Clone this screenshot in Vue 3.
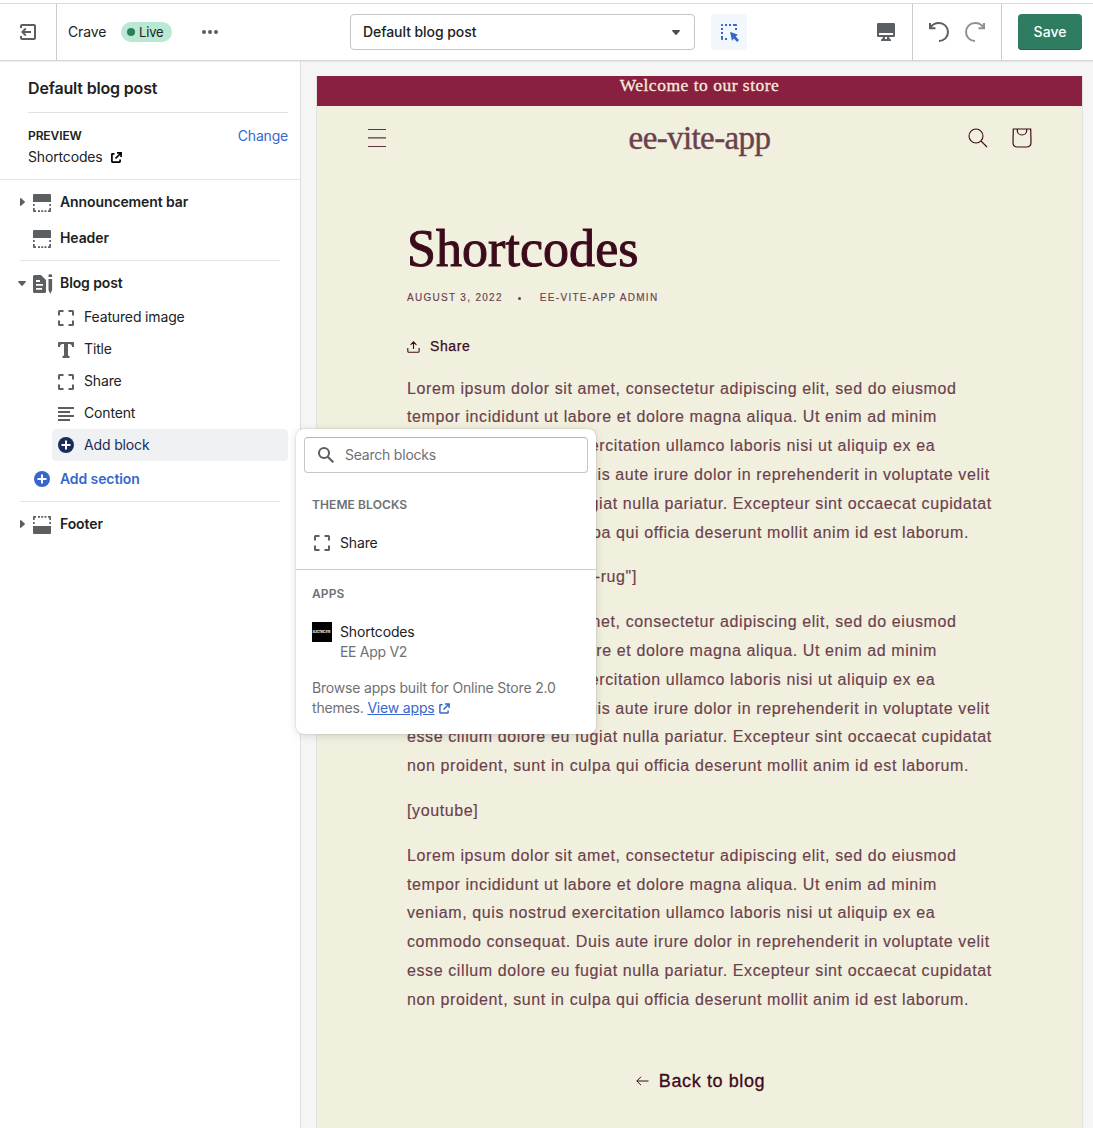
<script setup>
const lorem = [
  'Lorem ipsum dolor sit amet, consectetur adipiscing elit, sed do eiusmod',
  'tempor incididunt ut labore et dolore magna aliqua. Ut enim ad minim',
  'veniam, quis nostrud exercitation ullamco laboris nisi ut aliquip ex ea',
  'commodo consequat. Duis aute irure dolor in reprehenderit in voluptate velit',
  'esse cillum dolore eu fugiat nulla pariatur. Excepteur sint occaecat cupidatat',
  'non proident, sunt in culpa qui officia deserunt mollit anim id est laborum.',
]
const paragraphs = [lorem, ['[product handle="striped-rug"]'], lorem, ['[youtube]'], lorem]
const blocks = [
  { label: 'Featured image', icon: 'frame' },
  { label: 'Title', icon: 'title' },
  { label: 'Share', icon: 'frame' },
  { label: 'Content', icon: 'lines' },
]
</script>

<template>
  <div class="editor">
    <header class="topbar">
      <div class="exit">
        <svg width="20" height="20" viewBox="0 0 20 20" fill="none" stroke="#5c5f62" stroke-width="2">
          <path d="M3 6V4Q3 3 4 3H16Q17 3 17 4V16Q17 17 16 17H4Q3 17 3 16V14" />
          <path d="M4.5 10H13" /><path d="M7.8 6.5 4.3 10 7.8 13.5" stroke-width="1.8" />
        </svg>
      </div>
      <div class="theme">
        <span class="theme-name">Crave</span>
        <span class="badge"><i></i>Live</span>
        <svg class="more" width="16" height="4" viewBox="0 0 16 4" fill="#5c5f62"><circle cx="2" cy="2" r="2" /><circle cx="8" cy="2" r="2" /><circle cx="14" cy="2" r="2" /></svg>
      </div>
      <div class="center">
        <div class="select">
          <span>Default blog post</span>
          <svg width="8" height="5" viewBox="0 0 8 5" fill="#4a4d50"><path d="M.6 0h6.8q.8.2.4.9L4.5 4.7q-.5.5-1 0L.2.9Q-.1.2.6 0z" /></svg>
        </div>
        <div class="inspect">
          <svg width="20" height="20" viewBox="0 0 20 20" fill="#3767cc">
            <path d="M1 2q0-1 1-1h1v2H1zM5 1h2v2H5zM9 1h2v2H9zM13 1h2v2h-2zM1 5h2v2H1zM1 9h2v2H1zM1 13h2v2H1zM15 5h2v2h-2zM5 15h2v2H5zM1 15h2v2H2q-1 0-1-1zM15 1h1q1 0 1 1v1h-2z" />
            <path d="M10.700 9.100 17.300 11.600q.5.300 0 .7L15.700 13.600 19 17 17.100 18.900 13.800 15.500 12.500 17.300q-.5.300-.7-.2L10.200 9.700q0-.6.5-.6z" />
          </svg>
        </div>
      </div>
      <div class="device">
        <svg width="18" height="18" viewBox="0 0 18 18" fill="#5c5f62"><path fill-rule="evenodd" d="M1.200 0h15.600Q18 0 18 1.200v11.600q0 1.200-1.200 1.200H12q.2 1.600 1.200 2 .8.200.8 1v1H4v-1q0-.8.8-1 1-.4 1.200-2H1.200Q0 14 0 12.800V1.200Q0 0 1.200 0zM2 10v2h14v-2zM8 14v2h2v-2z" /></svg>
      </div>
      <div class="history">
        <svg width="22" height="22" viewBox="0 0 22 22" fill="none" stroke="#5c5f62" stroke-width="2"><path d="M2 2V7.200H7.500" /><path d="M2.300 7C4 3.700 7.300 2 11 2A9 9 0 1 1 11 20" /></svg>
        <svg width="22" height="22" viewBox="0 0 22 22" fill="none" stroke="#8c9196" stroke-width="2"><path d="M20 2V7.200H14.500" /><path d="M19.700 7C18 3.700 14.700 2 11 2A9 9 0 1 0 11 20" /></svg>
      </div>
      <div class="save-cell"><button class="save">Save</button></div>
    </header>

    <div class="body">
      <aside class="sidebar">
        <h2>Default blog post</h2>
        <div class="preview-info">
          <div class="info-row"><b>PREVIEW</b><a>Change</a></div>
          <div class="info-name">
            Shortcodes
            <svg width="11" height="11" viewBox="0 0 11 11" fill="none" stroke="#000" stroke-width="1.700"><path d="M3.500 1.800H1.500Q.9 1.800.9 2.400V9.500Q.9 10.100 1.500 10.100H8.500Q9.100 10.100 9.100 9.500V7.500M6 .9H10.100V5M10 1 4.500 6.500" /></svg>
          </div>
        </div>
        <nav class="tree">
          <div class="row">
            <svg class="caret" width="5" height="8" viewBox="0 0 5 8" fill="#5c5f62"><path d="M0 .6Q.2-.2 1 .3L4.700 3.500q.5.500 0 1L1 7.700Q.2 8.200 0 7.400z" /></svg>
            <svg width="18" height="18" viewBox="0 0 18 18" fill="#5c5f62"><path d="M1 0h16q1 0 1 1v7H0V1q0-1 1-1z" /><path d="M0 10h1.700v2H0zM16.300 10H18v2h-1.700zM0 14h1.700v2.300H3V18H1q-1 0-1-1zM16.300 14H18v3q0 1-1 1h-2v-1.700h1.300zM5 16.300h2V18H5zM8.200 16.300h2V18h-2zM11.500 16.300h2V18h-2z" /></svg>
            <b>Announcement bar</b>
          </div>
          <div class="row">
            <i class="caret"></i>
            <svg width="18" height="18" viewBox="0 0 18 18" fill="#5c5f62"><path d="M1 0h16q1 0 1 1v7H0V1q0-1 1-1z" /><path d="M0 10h1.700v2H0zM16.300 10H18v2h-1.700zM0 14h1.700v2.300H3V18H1q-1 0-1-1zM16.300 14H18v3q0 1-1 1h-2v-1.700h1.300zM5 16.300h2V18H5zM8.200 16.300h2V18h-2zM11.500 16.300h2V18h-2z" /></svg>
            <b>Header</b>
          </div>
          <hr />
          <div class="row">
            <svg class="caret down" width="8" height="5" viewBox="0 0 8 5" fill="#5c5f62"><path d="M.6 0h6.800q.8.200.4.900L4.500 4.700q-.5.500-1 0L.2.900Q-.1.200.6 0z" /></svg>
            <svg class="wide" width="20" height="20" viewBox="0 0 20 20" fill="#5c5f62"><path fill-rule="evenodd" d="M1.500 1H8l5 5v11.500q0 1.500-1.500 1.500h-10Q0 19 0 17.500v-15Q0 1 1.500 1zM3 6v2h4V6zM3 10v1.700h7V10zM3 14v1.700h6V14z" /><path d="M15.500 1.500q0-1.300 1.300-1.300h1q1.300 0 1.300 1.300V3h-3.600zM15.500 5h3.600v11l-1.800 4-1.800-4z" /></svg>
            <b>Blog post</b>
          </div>
          <div v-for="b in blocks" :key="b.label" class="block">
            <svg v-if="b.icon === 'frame'" width="16" height="16" viewBox="0 0 16 16" fill="none" stroke="#5c5f62" stroke-width="2"><path d="M1 5.500V1.500Q1 1 1.500 1H5.500M10.500 1H14.500Q15 1 15 1.500V5.500M15 10.500V14.500Q15 15 14.500 15H10.500M5.500 15H1.500Q1 15 1 14.500V10.500" /></svg>
            <svg v-else-if="b.icon === 'title'" width="16" height="16" viewBox="0 0 16 16" fill="#5c5f62"><path d="M1 0h14q1 0 1 1v4h-2Q14 2 11.500 2H10v11q0 1 1.500 1v2h-7v-2Q6 14 6 13V2H4.500Q2 2 2 5H0V1q0-1 1-1z" /></svg>
            <svg v-else width="16" height="16" viewBox="0 0 16 16" fill="#5c5f62"><path d="M0 1h16v2H0zM0 5h12v2H0zM0 9h16v2H0zM0 13h12v2H0z" /></svg>
            <span>{{ b.label }}</span>
          </div>
          <div class="block active">
            <svg width="16" height="16" viewBox="0 0 16 16"><circle cx="8" cy="8" r="8" fill="#1a2c5b" /><path d="M8 3.500v9M3.500 8h9" stroke="#fff" stroke-width="2" /></svg>
            <span>Add block</span>
          </div>
          <div class="row add">
            <i class="caret"></i>
            <svg width="16" height="16" viewBox="0 0 16 16"><circle cx="8" cy="8" r="8" fill="#3767cc" /><path d="M8 3.500v9M3.500 8h9" stroke="#fff" stroke-width="2" /></svg>
            <b>Add section</b>
          </div>
          <hr />
          <div class="row">
            <svg class="caret" width="5" height="8" viewBox="0 0 5 8" fill="#5c5f62"><path d="M0 .6Q.2-.2 1 .3L4.700 3.500q.5.500 0 1L1 7.700Q.2 8.200 0 7.400z" /></svg>
            <svg class="flip" width="18" height="18" viewBox="0 0 18 18" fill="#5c5f62"><path d="M1 0h16q1 0 1 1v7H0V1q0-1 1-1z" /><path d="M0 10h1.700v2H0zM16.300 10H18v2h-1.700zM0 14h1.700v2.300H3V18H1q-1 0-1-1zM16.300 14H18v3q0 1-1 1h-2v-1.700h1.300zM5 16.300h2V18H5zM8.200 16.300h2V18h-2zM11.500 16.300h2V18h-2z" /></svg>
            <b>Footer</b>
          </div>
        </nav>
      </aside>

      <main class="canvas">
        <div class="store">
          <div class="announce">Welcome to our store</div>
          <div class="store-head">
            <svg width="18" height="19" viewBox="0 0 18 19" fill="#5f3440"><path d="M0 0h18v1.100H0zM0 8.300h18v1.100H0zM0 16.900h18V18H0z" /></svg>
            <span class="brand">ee-vite-app</span>
            <div class="head-icons">
              <svg width="20" height="20" viewBox="0 0 20 20" fill="none" stroke="#3b0b1b" stroke-width="1.100"><circle cx="8" cy="8" r="7" /><path d="M13 13l6 6" /></svg>
              <svg width="20" height="20" viewBox="0 0 20 20" fill="none" stroke="#3b0b1b" stroke-width="1.200"><path d="M1.300 1H18.700L19 14.500Q19 19 14.500 19H5.500Q1 19 1 14.500ZM5.300 1V2.500A4.700 4.500 0 0 0 14.700 2.500V1" /></svg>
            </div>
          </div>
          <article>
            <h1>Shortcodes</h1>
            <div class="meta"><span>AUGUST 3, 2022</span><i></i><span>EE-VITE-APP ADMIN</span></div>
            <div class="share">
              <svg width="13" height="12" viewBox="0 0 13 12" fill="none" stroke="#3b0b1b" stroke-width="1.100"><path d="M.8 7V10.200Q.8 11.300 1.900 11.300H11Q12.100 11.300 12.100 10.200V7M6.500 8V1M3.600 3.800 6.500.9 9.400 3.800" /></svg>
              <span>Share</span>
            </div>
            <p v-for="(p, i) in paragraphs" :key="i"><span v-for="line in p" :key="line">{{ line }}</span></p>
            <div class="back">
              <svg width="13" height="10" viewBox="0 0 13 10" fill="none" stroke="#3b0b1b" stroke-width="1"><path d="M.8 5H12.500M5 .8.8 5 5 9.200" /></svg>
              <span>Back to blog</span>
            </div>
          </article>
        </div>
      </main>
    </div>

    <div class="popover">
      <div class="search">
        <svg width="16" height="16" viewBox="0 0 16 16" fill="none" stroke="#5c5f62" stroke-width="2"><circle cx="6" cy="6" r="5" /><path d="M9.700 9.700l5.600 5.600" /></svg>
        <span>Search blocks</span>
      </div>
      <div class="caption">THEME BLOCKS</div>
      <div class="option">
        <svg width="16" height="16" viewBox="0 0 16 16" fill="none" stroke="#5c5f62" stroke-width="2"><path d="M1 5.500V1.500Q1 1 1.500 1H5.500M10.500 1H14.500Q15 1 15 1.500V5.500M15 10.500V14.500Q15 15 14.500 15H10.500M5.500 15H1.500Q1 15 1 14.500V10.500" /></svg>
        <span>Share</span>
      </div>
      <hr />
      <div class="caption apps">APPS</div>
      <div class="app">
        <div class="app-logo"><span>ELECTRIC EYE</span></div>
        <div class="app-text"><div>Shortcodes</div><div class="sub">EE App V2</div></div>
      </div>
      <div class="browse">
        Browse apps built for Online Store 2.0<br />themes. <a>View apps</a>
        <svg width="11" height="11" viewBox="0 0 11 11" fill="none" stroke="#3767cc" stroke-width="1.500"><path d="M3.500 1.800H1.500Q.9 1.800.9 2.400V9.500Q.9 10.100 1.500 10.100H8.500Q9.100 10.100 9.100 9.500V7.500M6 .9H10.100V5M10 1 4.500 6.500" /></svg>
      </div>
    </div>
  </div>
</template>

<style>
body { margin: 0; overflow: hidden; }
</style>

<style scoped>
* { box-sizing: border-box; }
svg { display: block; flex: none; }
.editor { position: relative; width: 1093px; height: 1128px; overflow: hidden; display: flex; flex-direction: column; background: #fff; color: #202223; font: 400 14px/20px Inter, sans-serif; letter-spacing: -.15px; padding-top: 3px; }
b { font-weight: 600; letter-spacing: -.1px; }
hr { border: 0; height: 1px; margin: 4px 20px; background: #e1e3e5; }
.topbar { height: 58px; flex: none; display: flex; border-top: 1px solid #d9dadc; border-bottom: 1px solid #d5d6d8; box-shadow: 0 1px 1px rgba(0,0,0,.06); z-index: 1; }
.exit { width: 57px; border-right: 1px solid #c9cccf; display: flex; align-items: center; justify-content: center; }
.theme { width: 293px; padding-left: 11px; display: flex; align-items: center; }
.theme-name { width: 37px; margin-top: -1px; }
.badge { display: flex; align-items: center; width: 51px; height: 20px; margin-left: 16px; padding: 0 0 0 6px; border-radius: 10px; background: #b9e8d3; font-size: 13px; }
.badge i { width: 8px; height: 8px; margin-right: 4px; border-radius: 50%; background: #2a7f5f; }
.more { margin-left: 30px; }
.center { flex: 1; display: flex; align-items: center; gap: 16px; }
.select { width: 345px; height: 36px; padding: 0 14px 0 12px; display: flex; align-items: center; justify-content: space-between; border: 1px solid #c4c7ca; border-radius: 4px; font-weight: 500; letter-spacing: -.06px; }
.inspect { width: 36px; height: 36px; padding: 9px 8px 8px 9px; border-radius: 4px; background: #f2f7fe; }
.device { width: 53px; padding: 19px 0 0 17px; border-right: 1px solid #c9cccf; }
.history { width: 89px; padding: 17px 0 0 15px; display: flex; gap: 14px; border-right: 1px solid #c9cccf; }
.save-cell { width: 91px; padding: 10px 0 0 16px; }
.save { width: 64px; height: 36px; padding: 0 0 1px; border: 0; border-radius: 4px; background: #2e7d61; box-shadow: inset 0 -1px 0 #1f6a4d; color: #fff; font: 500 14px Inter, sans-serif; }

.body { flex: 1; min-height: 0; display: flex; }
.sidebar { width: 301px; flex: none; border-right: 1px solid #dcdee0; }
h2 { height: 52px; margin: 0 12px 0 28px; padding-top: 17px; border-bottom: 1px solid #dfe0e8; font-size: 16px; font-weight: 600; letter-spacing: -.17px; }
.preview-info { height: 67px; padding: 13px 12px 0 28px; border-bottom: 1px solid #e1e3e5; }
.info-row { display: flex; justify-content: space-between; }
.info-row b { font-size: 12px; }
.info-row a { color: #3767cc; letter-spacing: -.2px; }
.info-name { display: flex; align-items: center; gap: 8px; margin-top: 1px; }
.tree { padding-top: 4px; }
.row { display: flex; align-items: center; height: 36px; padding-left: 20px; }
.row .caret { width: 5px; margin-right: 8px; }
.row .caret.down { width: 8px; margin: 0 7px 0 -2px; }
.row > svg:not(.caret) { position: relative; top: 1px; }
.row b { margin-left: 9px; }
.row .wide { margin-right: -2px; }
.row.add { color: #3767cc; }
.row.add svg:not(.caret) { margin: 0 1px; top: 0; }
.flip { transform: scaleY(-1); }
.block { display: flex; align-items: center; gap: 10px; height: 32px; margin: 0 12px 0 52px; padding-left: 6px; border-radius: 4px; }
.block svg { position: relative; top: 1px; }
.block.active { background: #f0f1f3; color: #1a2c5b; }
.block.active svg { top: 0; }

.canvas { flex: 1; padding: 15px 10px 0 15px; background: #f5f5f6; }
.store { width: 767px; height: 100%; border: 1px solid #e2e3df; border-top: 0; border-bottom: 0; background: #f1efde; color: #3b0b1b; font-family: "Liberation Sans", sans-serif; }
.announce { height: 30px; background: #89203f; color: #f5ecdf; text-align: center; font: 17.500px/18px "Liberation Serif", serif; letter-spacing: .5px; -webkit-text-stroke: .3px; }
.store-head { display: flex; align-items: center; justify-content: space-between; height: 64px; padding: 0 50px 0 51px; }
.brand { margin-left: 45px; color: #6a414c; font: 33px/36px "Liberation Serif", serif; letter-spacing: -.6px; -webkit-text-stroke: .4px; }
.head-icons { display: flex; gap: 24px; }
article { padding-left: 90px; }
h1 { margin: 48px 0 0; font: 52px/62px "Liberation Serif", serif; letter-spacing: .05px; -webkit-text-stroke: 1px; }
.meta { display: flex; align-items: center; height: 18px; margin-top: 9px; color: #6a414c; font-size: 10px; letter-spacing: 1.3px; -webkit-text-stroke: .15px; }
.meta i { width: 3px; height: 3px; margin: 0 19px 0 15px; border-radius: 50%; background: #6a414c; }
.share { display: flex; align-items: center; gap: 10px; height: 20px; margin: 29px 0 18.700px; font-size: 14px; letter-spacing: .6px; -webkit-text-stroke: .25px; }
.share svg { position: relative; top: 1px; }
p { margin: 0 0 16px; color: #6a414c; font-size: 16px; line-height: 28.8px; letter-spacing: .6px; -webkit-text-stroke: .15px; }
p span { display: block; white-space: nowrap; }
.back { display: flex; align-items: center; justify-content: center; gap: 10px; margin: 53px 88px 0 0; font-size: 18px; line-height: 26px; letter-spacing: .6px; -webkit-text-stroke: .3px; }

.popover { position: absolute; z-index: 5; left: 296px; top: 429px; width: 300px; height: 305px; padding-top: 8px; border-radius: 8px; background: #fff; box-shadow: 0 0 2px rgba(0,0,0,.2), 0 2px 10px rgba(0,0,0,.12); }
.search { display: flex; align-items: center; gap: 11px; height: 36px; margin: 0 8px; padding-left: 13px; border: 1px solid #c4c7ca; border-top-color: #aeb4b9; border-radius: 4px; color: #6d7175; letter-spacing: -.22px; }
.caption { margin: 22px 16px 0; color: #6d7175; font-size: 12px; font-weight: 600; letter-spacing: .1px; }
.option { display: flex; align-items: center; gap: 10px; height: 20px; margin: 18px 18px 16px; }
.popover hr { margin: 0; background: #c9cccf; }
.caption.apps { margin-top: 14px; }
.app { display: flex; gap: 8px; margin: 18px 16px 0; }
.app-logo { width: 20px; height: 20px; display: flex; align-items: center; justify-content: center; background: #000; color: #fff; overflow: hidden; }
.app-logo span { flex: none; font: italic 800 8px/8px Inter, sans-serif; white-space: nowrap; transform: scale(.32, .4); }
.sub { color: #6d7175; letter-spacing: -.3px; }
.browse { margin: 16px 16px 0; color: #6d7175; white-space: nowrap; letter-spacing: -.18px; }
.browse a { color: #3767cc; text-decoration: underline; }
.browse svg { display: inline-block; margin-left: 4px; vertical-align: -1px; }
</style>
